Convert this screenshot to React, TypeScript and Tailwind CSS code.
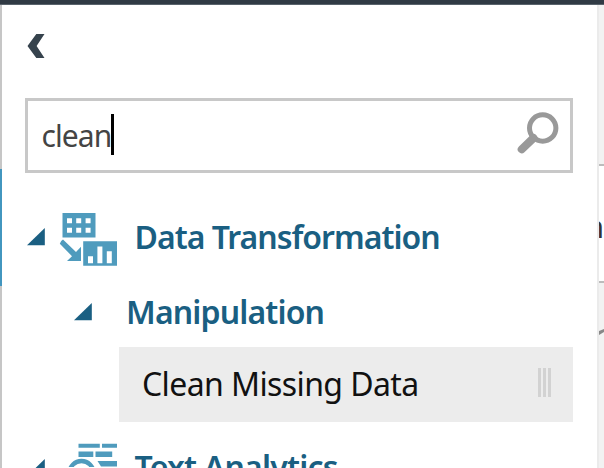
import type { ReactNode } from 'react';

const font = "font-['Noto_Sans','Open_Sans',sans-serif]";

function Expander({ className }: { className: string }) {
  return (
    <svg className={`shrink-0 ${className}`} width="18" height="18" viewBox="0 0 18 18">
      <path d="M17.8 0V17.3H0Z" fill="#1a5f82" />
    </svg>
  );
}

function TransformIcon() {
  return (
    <svg width="60" height="56" viewBox="0 0 60 56" className="shrink-0">
      <g fill="#4f9bbd">
        <path
          fillRule="evenodd"
          d="M4.5 3h33v24.5h-33zM9 8.2v5h5v-5zM18.2 8.2v5h5v-5zM27.6 8.2v5h5v-5zM9 17.7v5h5v-5zM18.2 17.7v5h5v-5zM27.6 17.7v5h5v-5z"
        />
        <path d="M5 29.4L18 41.9L23 36.7V50.9H9L14 46.2L1.8 33.7Q3 30.2 5 29.4Z" />
        <path fillRule="evenodd" d="M25.2 31.2h33.8v24.6h-33.8zM30 46.2v7h5v-7zM39.4 36.5v16.7h5v-16.7zM48.8 41.2v12h5v-12z" />
      </g>
    </svg>
  );
}

function TextIcon() {
  return (
    <svg width="60" height="26" viewBox="0 0 60 26" className="shrink-0">
      <g fill="#4f9bbd">
        <path d="M19.5 2.7h21.3v4H19.5zM43 2.7h15v4H43zM19.5 10.5h14.8v5.6H19.5zM36.5 10.5h16.7v5.6H36.5zM38.5 20h19.5v5.5H42Z" />
      </g>
      <circle cx="22.5" cy="32" r="12" fill="none" stroke="#4f9bbd" strokeWidth="4.4" />
    </svg>
  );
}

function Heading({ children, className }: { children: ReactNode; className: string }) {
  return <span className={`whitespace-nowrap text-[32px] leading-[44px] font-semibold text-[#1a5f82] ${className}`}>{children}</span>;
}

export default function App() {
  return (
    <div className={`flex h-[468px] w-[604px] flex-col overflow-hidden bg-white ${font}`}>
      <div className="h-[5px] shrink-0 border-b border-[#59636c] bg-[#303a44]" />
      <div className="flex h-[463px]">
        <div className="flex w-[1.5px] shrink-0 flex-col bg-[#c6c6c6] pt-[164px]">
          <div className="h-[117px] bg-[#4296bf]" />
        </div>

        <aside className="flex w-[595.5px] shrink-0 flex-col overflow-hidden">
          <button className="ml-[25px] mt-[28px] h-[26px] w-[20px] shrink-0">
            <svg width="20" height="26" viewBox="0 0 20 26">
              <path d="M9.3 1H17.5L9.6 13L17.5 25H9.3L.5 13Z" fill="#36434d" />
            </svg>
          </button>

          <div className="ml-[23.5px] mt-[39px] flex h-[75px] w-[548px] shrink-0 items-center border-[3px] border-[#c8c8c8]">
            <span className="ml-[13.5px] mt-[1px] text-[30px] leading-[44px] tracking-[-0.9px] text-[#444]">clean</span>
            <span className="ml-[-0.5px] mt-[-2px] h-[41px] w-[3px] bg-black" />
            <svg className="mb-[5px] ml-auto mr-[11px]" width="44" height="44" viewBox="0 0 44 44" fill="none" stroke="#999">
              <circle cx="27.7" cy="17" r="13.2" strokeWidth="5" />
              <path d="M18.5 27L6.7 38.3" strokeWidth="8" strokeLinecap="round" />
            </svg>
          </div>

          <div className="mt-[37px] flex h-[56px] shrink-0">
            <Expander className="ml-[25.5px] mt-[18px]" />
            <div className="ml-[12.5px]"><TransformIcon /></div>
            <Heading className="ml-[17px] mt-[5px] tracking-[-1px]">Data Transformation</Heading>
          </div>

          <div className="mt-[24px] flex h-[44px] shrink-0">
            <Expander className="ml-[72.5px] mt-[13px]" />
            <Heading className="ml-[34px] tracking-[-0.85px]">Manipulation</Heading>
          </div>

          <div className="ml-[117.5px] mt-[13px] flex h-[75px] w-[454px] shrink-0 items-center bg-[#ececec]">
            <span className="ml-[23px] mt-[-2px] whitespace-nowrap text-[32px] leading-[44px] tracking-[-0.6px] text-[#111]">Clean Missing Data</span>
            <div className="mb-[5px] ml-auto mr-[22px] flex gap-[2px]">
              <i className="h-[29px] w-[3px] bg-[#d2d2d2]" />
              <i className="h-[29px] w-[3px] bg-[#d2d2d2]" />
              <i className="h-[29px] w-[3px] bg-[#d2d2d2]" />
            </div>
          </div>

          <div className="mt-[19px] flex h-[26px] shrink-0">
            <Expander className="ml-[25.5px] mt-[18px]" />
            <div className="ml-[13.5px]"><TextIcon /></div>
            <Heading className="ml-[16px] mt-[4px] tracking-[-0.8px]">Text Analytics</Heading>
          </div>
        </aside>

        <div className="w-[2px] shrink-0 bg-[#ebebeb]" />
        <main className="flex w-[5px] shrink-0 flex-col overflow-hidden bg-[#f2f2f2]">
          <div className="h-[159px] shrink-0" />
          <div className="flex h-[119px] shrink-0 items-center border-y-2 border-[#bcbcbc] bg-white">
            <span className="ml-[-14px] mt-[5px] text-[31px] leading-[44px] text-[#333]">n</span>
          </div>
          <svg className="mt-[45px] shrink-0" width="5" height="8" viewBox="0 0 5 8">
            <path d="M0 3L5 1V4L0 7Z" fill="#888" />
          </svg>
        </main>
      </div>
    </div>
  );
}
